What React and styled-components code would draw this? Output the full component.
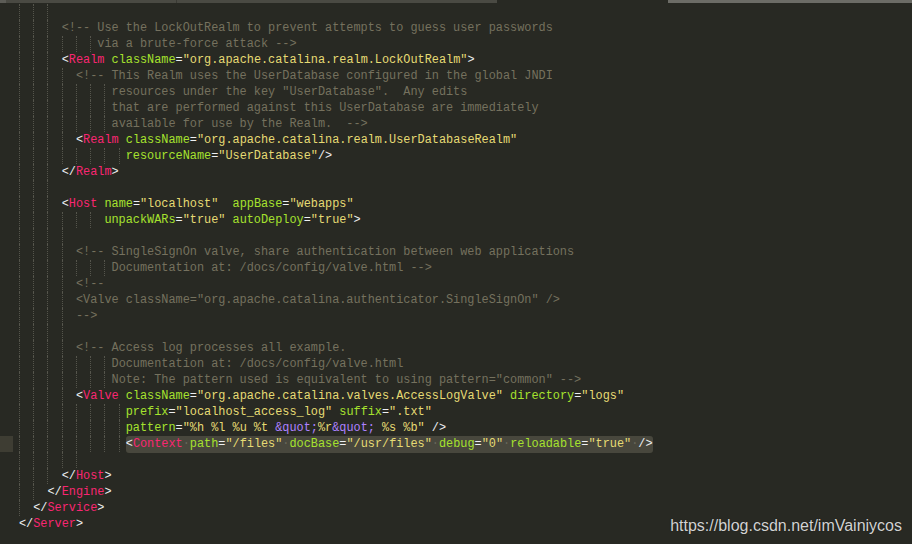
import styled, { createGlobalStyle } from "styled-components";

const lines = [
  { i: 0, g: 3 },
  { i: 6, c: true, text: "<!-- Use the LockOutRealm to prevent attempts to guess user passwords" },
  { i: 11, c: true, text: "via a brute-force attack -->" },
  { i: 6, text: '<Realm className="org.apache.catalina.realm.LockOutRealm">' },
  { i: 8, c: true, text: "<!-- This Realm uses the UserDatabase configured in the global JNDI" },
  { i: 13, c: true, text: 'resources under the key "UserDatabase".  Any edits' },
  { i: 13, c: true, text: "that are performed against this UserDatabase are immediately" },
  { i: 13, c: true, text: "available for use by the Realm.  -->" },
  { i: 8, text: '<Realm className="org.apache.catalina.realm.UserDatabaseRealm"' },
  { i: 15, text: 'resourceName="UserDatabase"/>' },
  { i: 6, text: "</Realm>" },
  { i: 0, g: 3 },
  { i: 6, text: '<Host name="localhost"  appBase="webapps"' },
  { i: 12, text: 'unpackWARs="true" autoDeploy="true">' },
  { i: 0, g: 4 },
  { i: 8, c: true, text: "<!-- SingleSignOn valve, share authentication between web applications" },
  { i: 13, c: true, text: "Documentation at: /docs/config/valve.html -->" },
  { i: 8, c: true, text: "<!--" },
  { i: 8, c: true, text: '<Valve className="org.apache.catalina.authenticator.SingleSignOn" />' },
  { i: 8, c: true, text: "-->" },
  { i: 0, g: 4 },
  { i: 8, c: true, text: "<!-- Access log processes all example." },
  { i: 13, c: true, text: "Documentation at: /docs/config/valve.html" },
  { i: 13, c: true, text: 'Note: The pattern used is equivalent to using pattern="common" -->' },
  { i: 8, text: '<Valve className="org.apache.catalina.valves.AccessLogValve" directory="logs"' },
  { i: 15, text: 'prefix="localhost_access_log" suffix=".txt"' },
  { i: 15, text: 'pattern="%h %l %u %t &quot;%r&quot; %s %b" />' },
  { i: 15, sel: true, text: '<Context path="/files" docBase="/usr/files" debug="0" reloadable="true" />' },
  { i: 0, g: 5 },
  { i: 6, text: "</Host>" },
  { i: 4, text: "</Engine>" },
  { i: 2, text: "</Service>" },
  { i: 0, text: "</Server>" },
];

const colors = {
  c: "#75715e",
  p: "#eef0f2",
  t: "#f92672",
  a: "#a6e22e",
  s: "#e6db74",
  e: "#ae81ff",
  w: "#67665a",
};

// rough xml highlighter, good enough for these lines
function tokenize(text) {
  const out = [];
  const re = /(<\/?)|(\/?>)|(=)|("[^"]*")|(\s+)|([^\s<>="\/]+)/g;
  let afterLt = false;
  let m;
  while ((m = re.exec(text))) {
    if (m[1]) {
      out.push(["p", m[1]]);
      afterLt = true;
    } else if (m[2] || m[3]) {
      out.push(["p", m[0]]);
    } else if (m[4]) {
      m[4].split(/(&quot;)/).forEach((part) => {
        if (part) out.push([part === "&quot;" ? "e" : "s", part]);
      });
    } else if (m[5]) {
      out.push(["w", m[5]]);
    } else {
      out.push([afterLt ? "t" : "a", m[0]]);
      afterLt = false;
    }
  }
  return out;
}

function CodeText({ line }) {
  if (line.c) return <Tok $kind="c">{line.text}</Tok>;
  return tokenize(line.text).map(([kind, str], k) => {
    if (kind === "w") {
      return line.sel ? (
        <Tok key={k} $kind="w">{str.replace(/ /g, "\u00b7")}</Tok>
      ) : (
        <span key={k}>{str}</span>
      );
    }
    return (
      <Tok key={k} $kind={kind}>
        {str}
      </Tok>
    );
  });
}

export default function App() {
  return (
    <>
      <GlobalStyle />
      <Editor>
        <TabStrip>
          <Tab $w={6} $tone="#5c5c56" />
          <Tab $w={170} $tone="#4a4a43" />
          <Tab $w={1} $tone="#3a3a34" />
          <Tab $w={320} $tone="#4a4a43" />
          <Tab $w={171} $tone="transparent" />
          <Tab $grow $tone="#6c6c66" />
        </TabStrip>
        <Code>
          {lines.map((line, n) => {
            const guides = line.g ?? Math.ceil(line.i / 2);
            return (
              <Row key={n}>
                <Gutter $active={line.sel} />
                <Indent $cols={line.text ? line.i : guides * 2}>
                  {Array.from({ length: guides }).map((_, k) => (
                    <Guide key={k} />
                  ))}
                </Indent>
                {line.text &&
                  (line.sel ? (
                    <Selection>
                      <CodeText line={line} />
                    </Selection>
                  ) : (
                    <CodeText line={line} />
                  ))}
              </Row>
            );
          })}
        </Code>
        <Watermark>https://blog.csdn.net/imVainiycos</Watermark>
      </Editor>
    </>
  );
}

const GlobalStyle = createGlobalStyle`
  html, body {
    margin: 0;
    padding: 0;
    background: #282923;
  }
`;

const Editor = styled.div`
  position: relative;
  width: 912px;
  height: 544px;
  overflow: hidden;
  background: #282923;
  display: flex;
  flex-direction: column;
`;

const TabStrip = styled.div`
  display: flex;
  height: 3px;
  flex-shrink: 0;
`;

const Tab = styled.div`
  width: ${(p) => (p.$grow ? "auto" : `${p.$w}px`)};
  flex: ${(p) => (p.$grow ? 1 : "none")};
  background: ${(p) => p.$tone};
`;

const Code = styled.div`
  margin-top: 1px;
  display: flex;
  flex-direction: column;
  font-family: "Liberation Mono", "DejaVu Sans Mono", monospace;
  font-size: 11.87px;
  white-space: pre;
`;

const Row = styled.div`
  display: flex;
  align-items: stretch;
  height: 16px;
  line-height: 16px;
`;

const Gutter = styled.div`
  width: 13px;
  margin-right: 6px;
  flex-shrink: 0;
  background: ${(p) => (p.$active ? "#3e3d33" : "transparent")};
`;

const Indent = styled.span`
  display: flex;
  width: ${(p) => p.$cols}ch;
  flex-shrink: 0;
  overflow: hidden;
`;

const Guide = styled.span`
  width: 2ch;
  flex-shrink: 0;
  border-left: 1px dotted #55554c;
  box-sizing: border-box;
`;

const Selection = styled.span`
  display: inline-block;
  background: #48473d;
  border-radius: 3px;
  height: 17px;
`;

const Tok = styled.span`
  color: ${(p) => colors[p.$kind]};
`;

const Watermark = styled.div`
  position: absolute;
  right: 10px;
  bottom: 9px;
  font-family: "Liberation Sans", Arial, sans-serif;
  font-size: 16px;
  line-height: 18px;
  color: #d2d2d2;
  text-shadow: 0 0 1px rgba(0, 0, 0, 0.6);
`;
